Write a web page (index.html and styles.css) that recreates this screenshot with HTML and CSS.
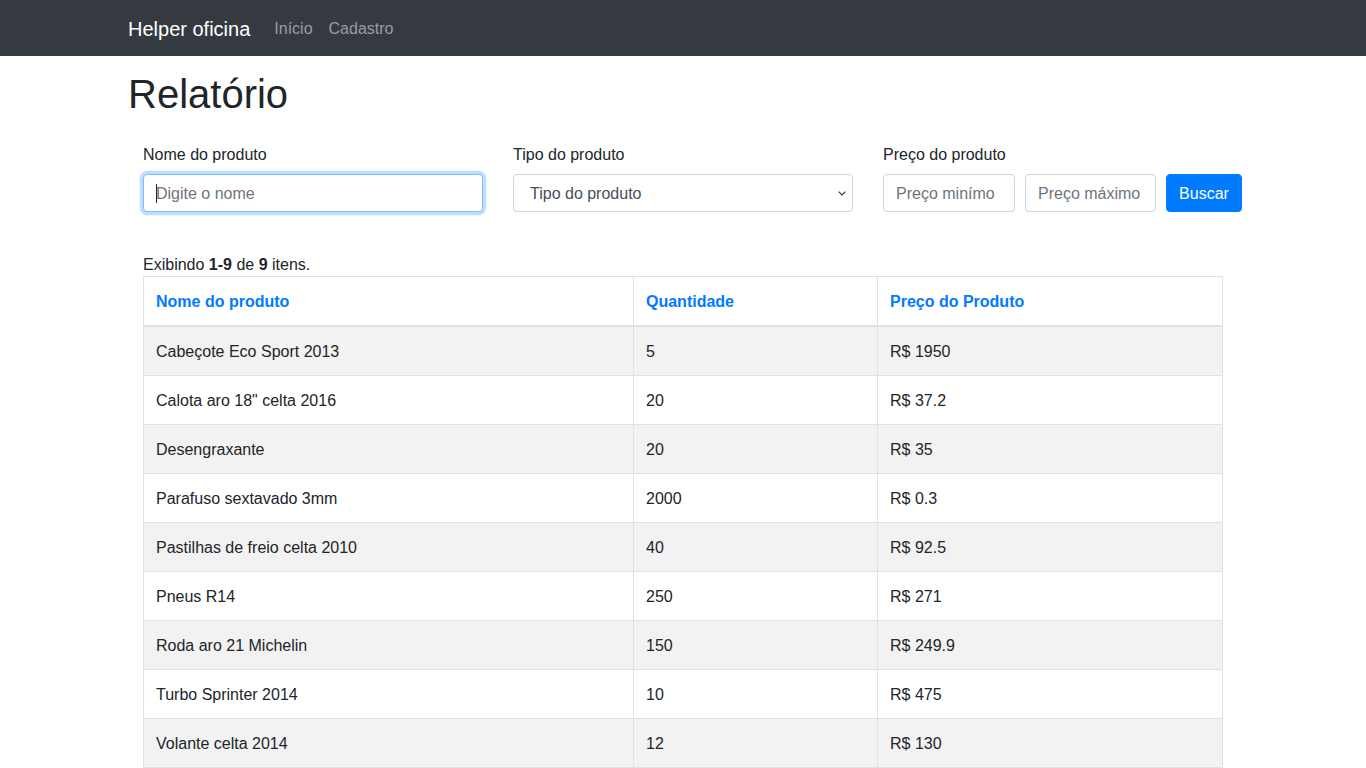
FILE: index.html
```html
<!DOCTYPE html>
<html lang="pt-BR">
<head>
<meta charset="utf-8">
<title>Relatório</title>
<link rel="stylesheet" href="styles.css">
</head>
<body>
<nav class="navbar">
  <div class="container nav-inner">
    <a class="brand" href="#">Helper oficina</a>
    <a class="nav-link" href="#">Início</a>
    <a class="nav-link" href="#">Cadastro</a>
  </div>
</nav>
<main class="container">
  <h1 class="title">Relatório</h1>
  <form class="filters">
    <div class="field">
      <label class="label">Nome do produto</label>
      <div class="input-wrap">
        <input class="input focused" type="text" placeholder="Digite o nome">
        <span class="caret"></span>
      </div>
    </div>
    <div class="field">
      <label class="label">Tipo do produto</label>
      <div class="select">
        <span>Tipo do produto</span>
        <svg class="chev" width="8" height="5" viewBox="0 0 8 5"><path d="M0.7 0.7 L4 4 L7.3 0.7" fill="none" stroke="#343a40" stroke-width="1.2"/></svg>
      </div>
    </div>
    <div class="field">
      <label class="label">Preço do produto</label>
      <div class="price-row">
        <input class="input price" type="text" placeholder="Preço minímo">
        <input class="input price max" type="text" placeholder="Preço máximo">
        <button class="btn" type="button">Buscar</button>
      </div>
    </div>
  </form>
  <div class="grid">
    <div class="summary">Exibindo <b>1-9</b> de <b>9</b> itens.</div>
    <table class="table">
      <thead>
        <tr>
          <th class="c1"><a href="#">Nome do produto</a></th>
          <th class="c2"><a href="#">Quantidade</a></th>
          <th class="c3"><a href="#">Preço do Produto</a></th>
        </tr>
      </thead>
      <tbody>
        <tr><td>Cabeçote Eco Sport 2013</td><td>5</td><td>R$ 1950</td></tr>
        <tr><td>Calota aro 18" celta 2016</td><td>20</td><td>R$ 37.2</td></tr>
        <tr><td>Desengraxante</td><td>20</td><td>R$ 35</td></tr>
        <tr><td>Parafuso sextavado 3mm</td><td>2000</td><td>R$ 0.3</td></tr>
        <tr><td>Pastilhas de freio celta 2010</td><td>40</td><td>R$ 92.5</td></tr>
        <tr><td>Pneus R14</td><td>250</td><td>R$ 271</td></tr>
        <tr><td>Roda aro 21 Michelin</td><td>150</td><td>R$ 249.9</td></tr>
        <tr><td>Turbo Sprinter 2014</td><td>10</td><td>R$ 475</td></tr>
        <tr><td>Volante celta 2014</td><td>12</td><td>R$ 130</td></tr>
      </tbody>
    </table>
  </div>
</main>
</body>
</html>
```
FILE: styles.css
```css
* { box-sizing: border-box; }
html, body { margin: 0; padding: 0; }
body {
  font-family: "Liberation Sans", Arial, sans-serif;
  font-size: 16px;
  line-height: 1.5;
  color: #212529;
  background: #fff;
}
a { text-decoration: none; }
.container {
  width: 1140px;
  margin: 0 auto;
  padding: 0 15px;
}
.navbar {
  background: #343a40;
  padding: 9px 0 7px;
}
.nav-inner {
  display: flex;
  align-items: center;
}
.brand {
  font-size: 20px;
  line-height: 30px;
  padding: 5px 0;
  margin-right: 16px;
  color: #fff;
}
.nav-link {
  color: rgba(255,255,255,0.5);
  padding: 8px;
  line-height: 24px;
}
.title {
  font-size: 40px;
  font-weight: 500;
  line-height: 1.2;
  margin: 14px 0 8px;
}
.filters {
  display: flex;
  margin-top: 24px;
}
.field {
  width: 370px;
  padding: 0 15px;
  display: flex;
  flex-direction: column;
}
.label {
  display: block;
  padding-top: 1px;
  margin-bottom: 7px;
  line-height: 24px;
}
.input-wrap { position: relative; }
.input {
  display: block;
  width: 100%;
  height: 38px;
  padding: 7px 12px 5px;
  font: inherit;
  font-size: 16px;
  line-height: 24px;
  color: #495057;
  background: #fff;
  border: 1px solid #ced4da;
  border-radius: 4px;
  outline: none;
}
.input::placeholder { color: #6c757d; opacity: 1; }
.input.focused {
  border-color: #80bdff;
  box-shadow: 0 0 0 3.2px rgba(0,123,255,0.25);
}
.caret {
  position: absolute;
  left: 13px;
  top: 10px;
  width: 1px;
  height: 19px;
  background: #212529;
}
.select {
  height: 38px;
  border: 1px solid #ced4da;
  border-radius: 4px;
  display: flex;
  align-items: center;
  justify-content: space-between;
  padding: 2px 6px 0 16px;
  color: #495057;
}
.chev { display: block; margin-top: -2px; }
.price-row {
  display: flex;
  gap: 10px;
  width: 359px;
}
.input.price {
  width: 132px;
  flex: none;
}
.input.price.max { width: 131px; }
.btn {
  flex: none;
  height: 38px;
  width: 76px;
  padding: 7px 12px 5px;
  font: inherit;
  font-size: 16px;
  line-height: 24px;
  color: #fff;
  background: #007bff;
  border: 1px solid #007bff;
  border-radius: 4px;
}
.grid {
  margin-top: 40px;
  padding: 0 15px;
}
.summary {
  padding-top: 1px;
  line-height: 23px;
}
.table {
  width: 1080px;
  border-collapse: collapse;
  margin-bottom: 16px;
}
.table th, .table td {
  border: 1px solid #dee2e6;
  padding: 13px 12px 11px;
  text-align: left;
  vertical-align: top;
  line-height: 24px;
}
.table th {
  font-weight: 700;
  border-bottom-width: 2px;
}
.table th a { color: #007bff; }
.c1 { width: 490px; }
.c2 { width: 244px; }
.table tbody tr:nth-child(odd) { background: #f2f2f2; }
```
